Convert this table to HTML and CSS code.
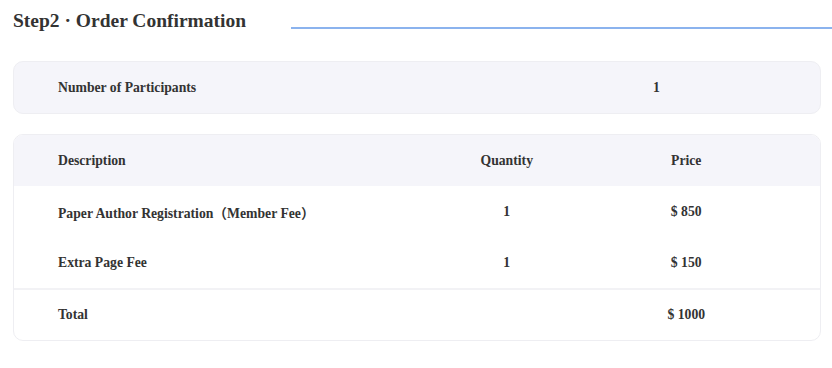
FILE: index.html
```html
<!DOCTYPE html>
<html>
<head>
<meta charset="utf-8">
<link rel="stylesheet" href="styles.css">
</head>
<body>
<div class="page">
  <div class="step-head">
    <h2 class="step-title">Step2 · Order Confirmation</h2>
    <div class="step-line"></div>
  </div>
  <div class="card participants">
    <div class="p-label">Number of Participants</div>
    <div class="p-value">1</div>
  </div>
  <div class="card order">
    <div class="row head">
      <div class="c-desc">Description</div>
      <div class="c-num">Quantity</div>
      <div class="c-num">Price</div>
    </div>
    <div class="row">
      <div class="c-desc">Paper Author Registration（Member Fee）</div>
      <div class="c-num">1</div>
      <div class="c-num">$ 850</div>
    </div>
    <div class="row">
      <div class="c-desc">Extra Page Fee</div>
      <div class="c-num">1</div>
      <div class="c-num">$ 150</div>
    </div>
    <div class="row total">
      <div class="c-desc">Total</div>
      <div class="c-num"></div>
      <div class="c-num">$ 1000</div>
    </div>
  </div>
</div>
</body>
</html>
```
FILE: styles.css
```css
* { box-sizing: border-box; }
html, body { margin: 0; padding: 0; background: #fff; }
body {
  font-family: "Liberation Serif", "Times New Roman", "Noto Sans CJK SC", serif;
  color: #333;
  font-weight: bold;
}
.page { width: 832px; padding: 10px 0 0 13px; }
.step-head {
  display: flex;
  align-items: flex-end;
  height: 22px;
}
.step-title {
  margin: 0;
  font-size: 19.5px;
  line-height: 22px;
  font-weight: bold;
  white-space: nowrap;
}
.step-line {
  flex: 1;
  height: 2px;
  background: #8bb3ee;
  margin-left: 45px;
  margin-bottom: 3px;
}
.card {
  width: 808px;
  border: 1px solid #eeeef2;
  border-radius: 10px;
}
.participants {
  margin-top: 29px;
  height: 53px;
  background: #f5f5fa;
  display: grid;
  grid-template-columns: 595px 1fr;
  align-items: center;
  padding-left: 44px;
  font-size: 13.7px;
}
.order {
  margin-top: 20px;
  overflow: hidden;
  font-size: 13.7px;
}
.row {
  display: grid;
  grid-template-columns: 359px 179.5px 179.5px;
  align-items: center;
  height: 51px;
  padding-left: 44px;
}
.row.head { background: #f5f5fa; }
.row.total { border-top: 2px solid #f2f2f5; height: 52px; }
.c-num { text-align: center; }
```
